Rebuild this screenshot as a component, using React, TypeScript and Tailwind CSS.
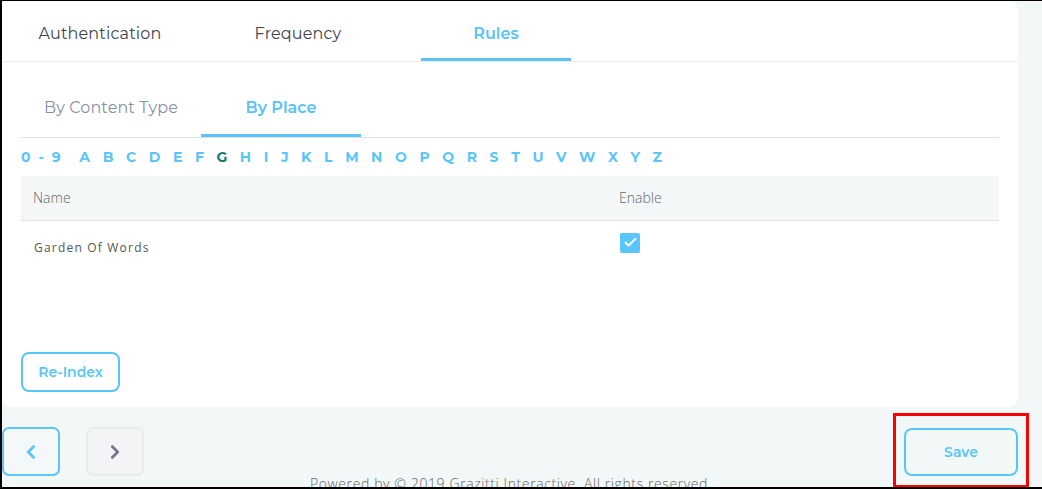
import { Check, ChevronLeft, ChevronRight } from "lucide-react";

const LETTERS = ["A", "B", "C", "D", "E", "F", "G", "H", "I", "J", "K", "L", "M", "N", "O", "P", "Q", "R", "S", "T", "U", "V", "W", "X", "Y", "Z"];

const font = "font-['Montserrat','Open_Sans',sans-serif]";

export default function App() {
  return (
    <div className={`relative h-[489px] w-[1042px] overflow-hidden border-t border-b-2 border-l-2 border-black bg-[#f2f7f7] ${font}`}>
      {/* card */}
      <div className="flex h-[406px] w-[1016px] flex-col rounded-b-[10px] rounded-tr-[10px] bg-white">
        {/* main tabs */}
        <div className="flex h-[61px] gap-[48px] border-b border-[#ececec] pl-[23px]">
          {["Authentication", "Frequency", "Rules"].map((t) => (
            <div
              key={t}
              className={
                t === "Rules"
                  ? "flex w-[150px] items-center justify-center border-b-[3px] border-[#59c3f5] pt-[9px] text-[16px] font-semibold text-[#59c3f5]"
                  : "flex w-[150px] items-center justify-center pt-[6px] text-[16px] tracking-[0.15px] text-[#3f4450]"
              }
            >
              {t}
            </div>
          ))}
        </div>

        <div className="flex flex-1 flex-col px-[19px]">
          {/* sub tabs */}
          <div className="mt-[15px] flex h-[61px] border-b border-[#e3e3e6]">
            <div className="flex w-[180px] items-center justify-center pt-[2px] text-[16px] tracking-[0.1px] text-[#8791a5]">By Content Type</div>
            <div className="flex w-[160px] items-center justify-center border-b-[3px] border-[#59c3f5] pt-[5px] text-[16px] font-semibold text-[#59c3f5]">
              By Place
            </div>
          </div>

          {/* alphabet */}
          <div className="flex h-[38px] items-center gap-[12.6px] text-[14px] font-bold text-[#5ac5f8]">
            <span className="mr-[4px] tracking-[2px]">0 - 9</span>
            {LETTERS.map((l) => (
              <span key={l} className={l === "G" ? "text-[#0f7a73]" : ""}>
                {l}
              </span>
            ))}
          </div>

          {/* table */}
          <div className="font-['Open_Sans',sans-serif]">
            <div className="flex h-[45px] items-center border-b border-[#dfe3e8] bg-[#f3f7f8] pb-[2px] text-[14px] font-light text-[#666]">
              <div className="w-[598px] pl-[12px]">Name</div>
              <div>Enable</div>
            </div>
            <div className="flex h-[53px] items-center">
              <div className="w-[599px] pl-[13px] text-[12px] tracking-[1.2px] text-[#555]">Garden Of Words</div>
              <div className="mb-[10px] flex h-[20px] w-[20px] items-center justify-center rounded-[2px] bg-[#5ac5f8]">
                <Check size={15} strokeWidth={3} color="#fff" />
              </div>
            </div>
          </div>

          <div className="mt-auto mb-[15px]">
            <button className="h-[40px] w-[99px] rounded-[8px] border-2 border-[#5ac5f8] text-[14px] font-semibold text-[#5ac5f8]">Re-Index</button>
          </div>
        </div>
      </div>

      {/* bottom nav */}
      <div className="mt-[20px] flex items-start pr-[24px]">
        <button className="flex h-[49px] w-[58px] items-center justify-center rounded-[7px] border-2 border-[#5ac5f8] bg-[#f4f8f9]">
          <ChevronLeft size={22} strokeWidth={3} color="#5ac5f8" />
        </button>
        <button className="ml-[26px] flex h-[49px] w-[58px] items-center justify-center rounded-[7px] border-2 border-[#e9ebef] bg-[#f2f4f6]">
          <ChevronRight size={22} strokeWidth={3} color="#77778a" />
        </button>
        <button className="ml-auto mt-[1px] h-[48px] w-[114px] rounded-[8px] border-2 border-[#5ac5f8] text-[14px] font-semibold text-[#5ac5f8]">Save</button>
      </div>
      <div className="-mt-[3px] text-center font-['Open_Sans',sans-serif] text-[14px] font-light tracking-[0.6px] text-[#666]">
        <span className="ml-[-22px]">Powered by © 2019 Grazitti Interactive. All rights reserved.</span>
      </div>

      {/* annotation */}
      <div className="pointer-events-none absolute left-[891px] top-[412px] h-[75px] w-[136px] border-[3px] border-[#f00]" />
    </div>
  );
}
